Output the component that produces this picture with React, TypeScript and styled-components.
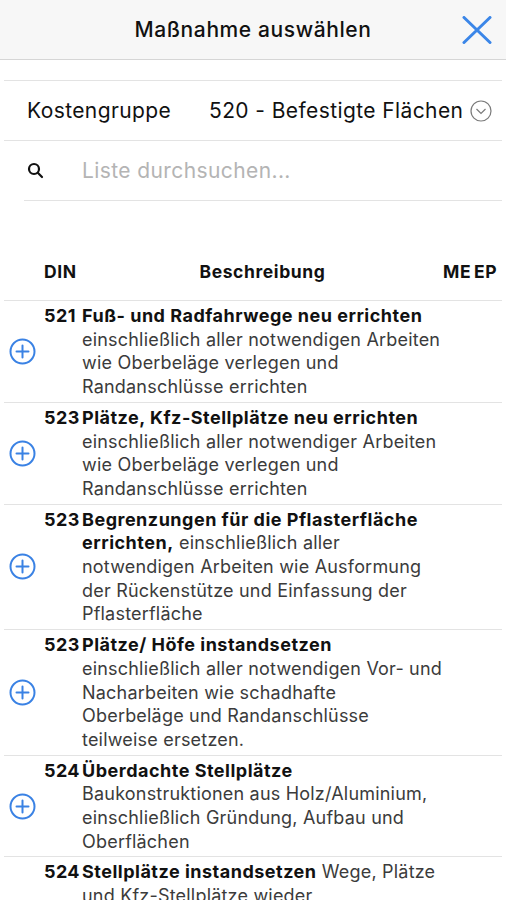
import * as React from 'react';
import styled, { createGlobalStyle } from 'styled-components';

const GlobalStyle = createGlobalStyle`
    body {
        margin: 0;
        background: #ffffff;
        font-family: Inter, "Noto Sans", sans-serif;
        color: #111111;
    }
`;

interface Measure {
    din: string;
    title: string;
    desc: string;
}

const measures: Measure[] = [
    {
        din: '521',
        title: 'Fuß- und Radfahrwege neu errichten',
        desc: '\neinschließlich aller notwendigen Arbeiten\nwie Oberbeläge verlegen und\nRandanschlüsse errichten',
    },
    {
        din: '523',
        title: 'Plätze, Kfz-Stellplätze neu errichten',
        desc: '\neinschließlich aller notwendiger Arbeiten\nwie Oberbeläge verlegen und\nRandanschlüsse errichten',
    },
    {
        din: '523',
        title: 'Begrenzungen für die Pflasterfläche\nerrichten,',
        desc: ' einschließlich aller\nnotwendigen Arbeiten wie Ausformung\nder Rückenstütze und Einfassung der\nPflasterfläche',
    },
    {
        din: '523',
        title: 'Plätze/ Höfe instandsetzen',
        desc: '\neinschließlich aller notwendigen Vor- und\nNacharbeiten wie schadhafte\nOberbeläge und Randanschlüsse\nteilweise ersetzen.',
    },
    {
        din: '524',
        title: 'Überdachte Stellplätze',
        desc: '\nBaukonstruktionen aus Holz/Aluminium,\neinschließlich Gründung, Aufbau und\nOberflächen',
    },
    {
        din: '524',
        title: 'Stellplätze instandsetzen',
        desc: ' Wege, Plätze\nund Kfz-Stellplätze wieder\nherstellen, einschließlich aller\nnotwendigen Vor- und Nacharbeiten\nwie Oberbeläge teilweise ersetzen.',
    },
];

const NavBar = styled.header`
    display: grid;
    grid-template-columns: 1fr auto 1fr;
    align-items: center;
    height: 59px;
    background: #f7f7f7;
    border-bottom: 1px solid #d6d6d6;
`;

const NavTitle = styled.h1`
    grid-column: 2;
    margin: 0;
    font-size: 21px;
    font-weight: 500;
    letter-spacing: 0.6px;
`;

const CloseButton = styled.button`
    justify-self: end;
    margin-right: 14px;
    padding: 0;
    border: none;
    background: none;
    display: flex;
`;

const Panel = styled.div`
    margin: 20px 4px 0;
    border-top: 1px solid #e3e3e3;
`;

const FieldRow = styled.div<{ $inset?: boolean }>`
    display: flex;
    align-items: center;
    height: 59px;
    border-bottom: 1px solid #e3e3e3;
    margin-left: ${p => (p.$inset ? '20px' : '0')};
    padding-left: ${p => (p.$inset ? '3px' : '23px')};
    font-size: 21px;
    letter-spacing: 0.4px;
`;

const FieldLabel = styled.span`
    width: 182px;
`;

const FieldValue = styled.span`
    flex: 1;
`;

const SearchIcon = styled.span`
    display: flex;
    width: 55px;
`;

const SearchInput = styled.input`
    flex: 1;
    border: none;
    outline: none;
    font: inherit;
    letter-spacing: inherit;
    padding: 0;
    color: #111111;
    &::placeholder {
        color: #b4b4b4;
    }
`;

const Table = styled.div`
    margin: 0 4px;
`;

const Row = styled.div`
    display: grid;
    grid-template-columns: 40px 38px 1fr 31px 28px;
    align-items: center;
    border-bottom: 1px solid #e3e3e3;
`;

const HeadRow = styled(Row)`
    padding: 59px 0 16px;
    font-size: 17.5px;
    font-weight: 700;
    line-height: 24px;
    letter-spacing: 0.6px;
`;

const HeadCell = styled.span<{ $center?: boolean }>`
    text-align: ${p => (p.$center ? 'center' : 'left')};
`;

const ItemRow = styled(Row)`
    padding: 3px 0 3px;
    font-size: 18px;
    line-height: 23.7px;
    letter-spacing: 0.2px;
`;

const AddButton = styled.button`
    justify-self: start;
    margin-left: 5px;
    padding: 0;
    border: none;
    background: none;
    display: flex;
`;

const Din = styled.span`
    align-self: start;
    font-weight: 700;
    letter-spacing: 0.4px;
`;

const Text = styled.div`
    align-self: start;
    white-space: pre-line;
    color: #3b3b3b;
    & > b {
        color: #111111;
        font-weight: 700;
        letter-spacing: 0.5px;
    }
`;

const PlusCircle = () => (
    <svg width="27" height="27" viewBox="0 0 27 27" fill="none" stroke="#3a82e4" strokeWidth="2" strokeLinecap="round">
        <circle cx="13.5" cy="13.5" r="12" />
        <path d="M13.5 7.5v12M7.5 13.5h12" />
    </svg>
);

const App = () => {
    const [query, setQuery] = React.useState('');

    return (
        <>
            <GlobalStyle />
            <NavBar>
                <NavTitle>Maßnahme auswählen</NavTitle>
                <CloseButton aria-label="Schließen">
                    <svg width="30" height="28" viewBox="0 0 30 28" fill="none" stroke="#3b86e8" strokeWidth="3" strokeLinecap="round">
                        <path d="M2 1.5l26 25M28 1.5L2 26.5" />
                    </svg>
                </CloseButton>
            </NavBar>
            <Panel>
                <FieldRow>
                    <FieldLabel>Kostengruppe</FieldLabel>
                    <FieldValue>520 - Befestigte Flächen</FieldValue>
                    <svg width="22" height="22" viewBox="0 0 22 22" fill="none" stroke="#7a7a7a" strokeWidth="1.2" style={{ marginRight: 10 }}>
                        <circle cx="11" cy="11" r="10" />
                        <path d="M6.5 9l4.5 4.5L15.5 9" />
                    </svg>
                </FieldRow>
                <FieldRow $inset>
                    <SearchIcon>
                        <svg width="17" height="17" viewBox="0 0 17 17" fill="none" stroke="#111" strokeWidth="2.2" strokeLinecap="round">
                            <circle cx="7" cy="7" r="5" />
                            <path d="M10.8 10.8l4.2 4.2" />
                        </svg>
                    </SearchIcon>
                    <SearchInput
                        placeholder="Liste durchsuchen..."
                        value={query}
                        onChange={e => setQuery(e.target.value)}
                    />
                </FieldRow>
            </Panel>
            <Table>
                <HeadRow>
                    <span />
                    <HeadCell>DIN</HeadCell>
                    <HeadCell $center>Beschreibung</HeadCell>
                    <HeadCell>ME</HeadCell>
                    <HeadCell>EP</HeadCell>
                </HeadRow>
                {measures.map((m, i) => (
                    <ItemRow key={i}>
                        <AddButton aria-label="Hinzufügen">
                            <PlusCircle />
                        </AddButton>
                        <Din>{m.din}</Din>
                        <Text>
                            <b>{m.title}</b>
                            {m.desc}
                        </Text>
                        <span />
                        <span />
                    </ItemRow>
                ))}
            </Table>
        </>
    );
};

export default App;
